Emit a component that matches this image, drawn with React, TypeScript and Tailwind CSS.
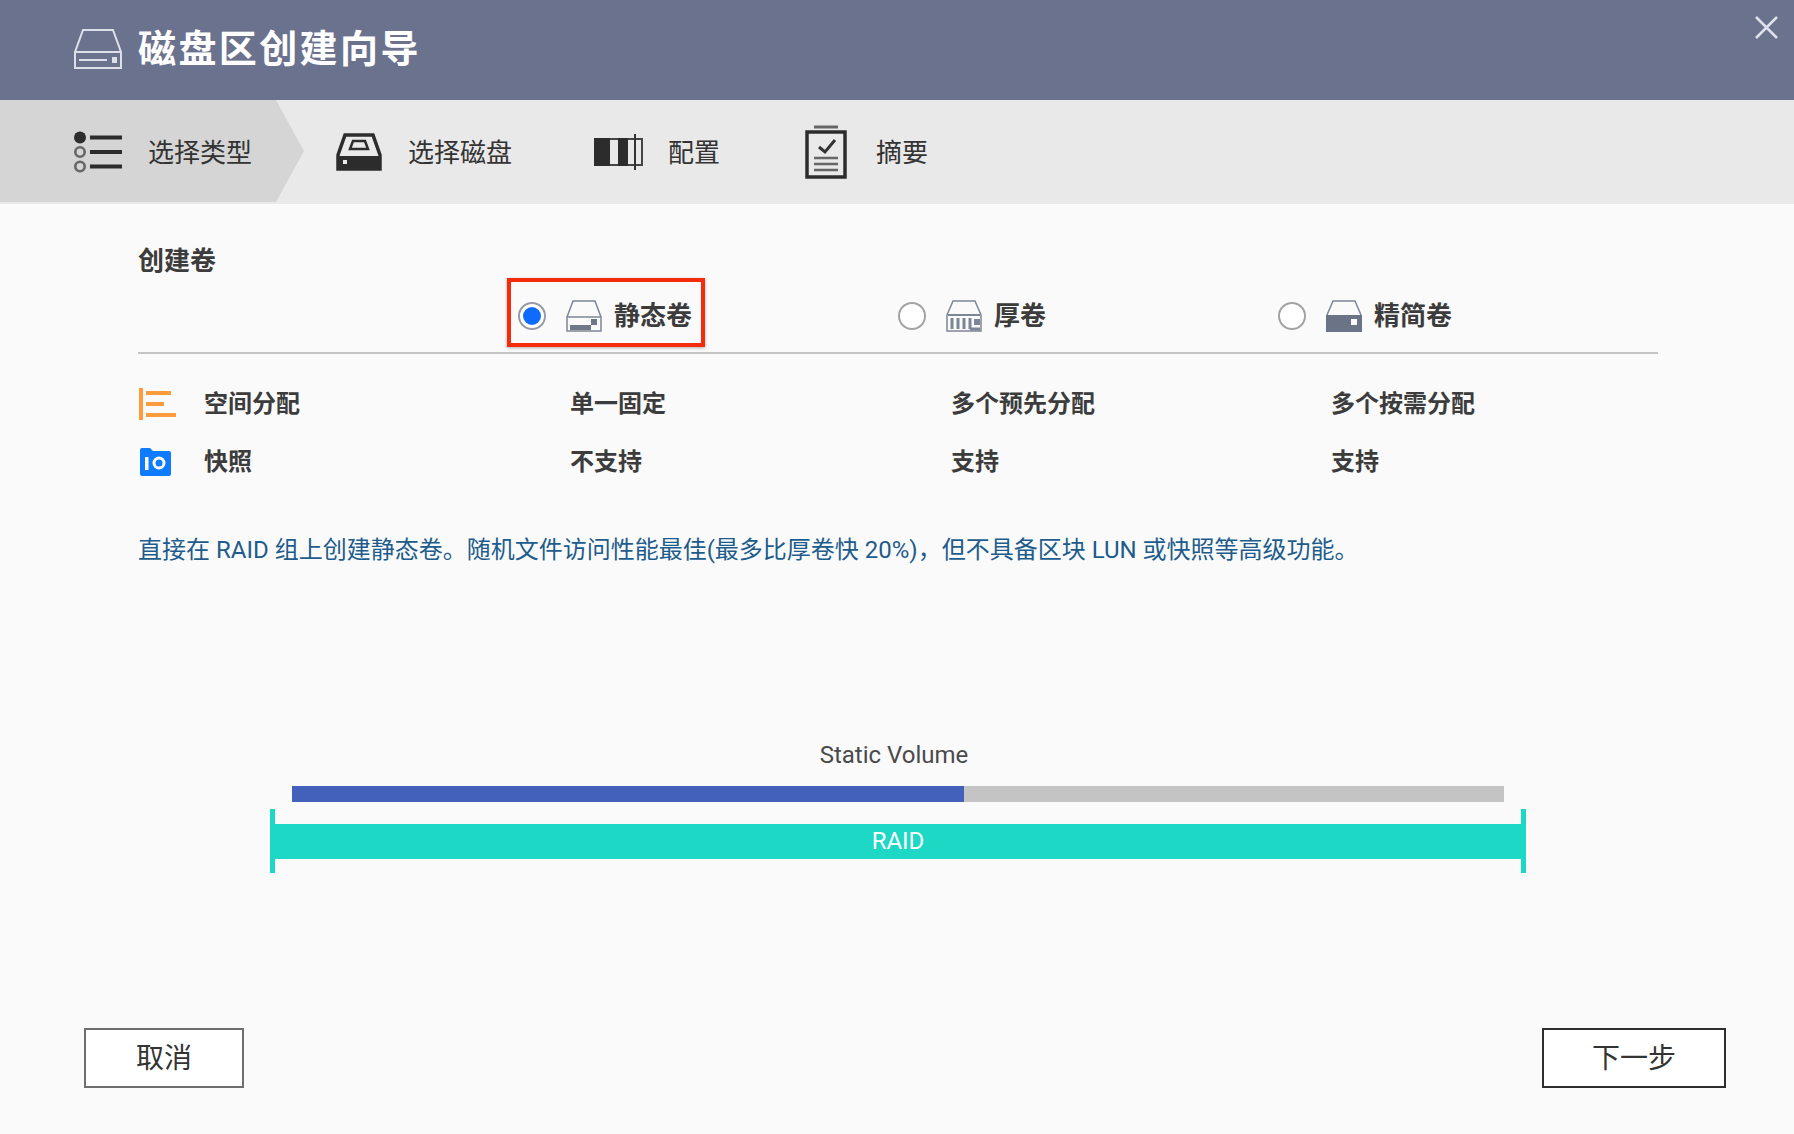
import React from 'react';

const font = { fontFamily: '"Roboto", "Noto Sans CJK SC", sans-serif' };

const HeaderDisk = () => (
  <svg width="50" height="42" viewBox="0 0 50 42" fill="none" stroke="#dde0e8" strokeWidth="2">
    <path d="M2 24 L10 2 H40 L48 24 V40 H2 Z" />
    <path d="M2 24 H48" />
    <path d="M6 32 H34" />
    <rect x="39" y="29" width="5" height="6" fill="#dde0e8" stroke="none" />
  </svg>
);

const ListIcon = () => (
  <svg width="50" height="42" viewBox="0 0 50 42" fill="none">
    <circle cx="6" cy="6.5" r="6" fill="#2c2c2c" />
    <circle cx="6" cy="21" r="4.7" stroke="#666" strokeWidth="2.6" />
    <circle cx="6" cy="35.5" r="4.7" stroke="#666" strokeWidth="2.6" />
    <path d="M16 6.5 H48 M16 21 H48 M16 35.5 H48" stroke="#2c2c2c" strokeWidth="4" />
  </svg>
);

const SolidDisk = () => (
  <svg width="46" height="38" viewBox="0 0 46 38" fill="none">
    <path d="M2 22 L9 2 H37 L44 22 V36 H2 Z" stroke="#2c2c2c" strokeWidth="3.5" />
    <path d="M2 23 H44 V36 H2 Z" fill="#2c2c2c" />
    <path d="M14 16 L17 8 H29 L32 16 Z" stroke="#2c2c2c" strokeWidth="2.5" />
    <rect x="7" y="27" width="4" height="4" fill="#e9e9e9" />
  </svg>
);

const ConfigIcon = () => (
  <svg width="49" height="36" viewBox="0 0 49 36" fill="none">
    <rect x="1" y="5" width="47" height="26" fill="#e9e9e9" stroke="#444" strokeWidth="2" />
    <rect x="0" y="4" width="16" height="28" fill="#2c2c2c" />
    <rect x="24" y="4" width="10" height="28" fill="#2c2c2c" />
    <path d="M41 0 V36" stroke="#333" strokeWidth="2" />
  </svg>
);

const SummaryIcon = () => (
  <svg width="42" height="54" viewBox="0 0 42 54" fill="none">
    <path d="M9 2 H33" stroke="#666" strokeWidth="3" />
    <rect x="2" y="7" width="38" height="45" stroke="#2c2c2c" strokeWidth="3.5" />
    <path d="M14 22 L20 27 L30 15" stroke="#333" strokeWidth="3" />
    <path d="M9 33 H33 M9 39 H33 M9 45 H33" stroke="#666" strokeWidth="2.5" />
  </svg>
);

const Radio = ({ on }: { on?: boolean }) => (
  <span className={`flex h-[28px] w-[28px] shrink-0 items-center justify-center rounded-full border-2 bg-white ${on ? 'border-[#9a9ca3]' : 'border-[#a3a3a3]'}`}>
    {on && <span className="h-[18px] w-[18px] rounded-full bg-[#0f6bff]" />}
  </span>
);

const StaticDisk = () => (
  <svg width="36" height="32" viewBox="0 0 36 32" fill="none">
    <path d="M1 17 L7 1 H29 L35 17 V31 H1 Z" stroke="#7d8696" strokeWidth="1.5" />
    <path d="M1 17 H35" stroke="#7d8696" strokeWidth="1.5" />
    <rect x="4" y="25" width="21" height="5" fill="#6f7888" />
    <rect x="25" y="19" width="6" height="6" fill="#6f7888" />
  </svg>
);

const ThickDisk = () => (
  <svg width="36" height="32" viewBox="0 0 36 32" fill="none">
    <path d="M1 15 L7 1 H29 L35 15 V31 H1 Z" stroke="#7d8696" strokeWidth="1.5" />
    <path d="M2 15 H34" stroke="#7d8696" strokeWidth="2" />
    <path d="M6 18 V29 M12 18 V29 M18 18 V29 M24 18 V29 M24 29 H34" stroke="#7d8696" strokeWidth="3" />
    <rect x="28" y="19" width="6" height="6" fill="#7d8696" />
  </svg>
);

const ThinDisk = () => (
  <svg width="36" height="32" viewBox="0 0 36 32" fill="none">
    <path d="M1 15 L7 1 H29 L35 15" stroke="#7d8696" strokeWidth="1.5" />
    <path d="M0 15 H36 V32 H0 Z" fill="#6b7486" />
    <rect x="25" y="19" width="6" height="6" fill="#fafafa" />
  </svg>
);

const SpaceIcon = () => (
  <svg width="37" height="32" viewBox="0 0 37 32" fill="#ff9a3d">
    <rect x="0" y="0" width="4" height="32" />
    <rect x="7" y="3" width="25" height="4" />
    <rect x="7" y="14" width="18" height="4" />
    <rect x="7" y="25" width="30" height="4" />
  </svg>
);

const SnapshotIcon = () => (
  <svg width="32" height="28" viewBox="0 0 32 28">
    <path d="M1 2 Q1 0 3 0 H11 L14 3 H30 Q32 3 32 5 V26 Q32 28 30 28 H3 Q1 28 1 26 Z" fill="#0f7bff" />
    <rect x="6" y="9" width="3.5" height="13" fill="#fff" />
    <circle cx="20" cy="15" r="5" fill="none" stroke="#fff" strokeWidth="3" />
  </svg>
);

const steps = [
  { icon: <ListIcon />, label: '选择类型', width: 'w-[276px]', gap: 'gap-[24px]', pad: 'pl-[74px]' },
  { icon: <SolidDisk />, label: '选择磁盘', width: 'w-[318px]', gap: 'gap-[26px]', pad: 'pl-[60px]' },
  { icon: <ConfigIcon />, label: '配置', width: 'w-[211px]', gap: 'gap-[25px]', pad: 'pl-0' },
  { icon: <SummaryIcon />, label: '摘要', width: 'w-[200px]', gap: 'gap-[29px]', pad: 'pl-0' },
];

const options = [
  { icon: <StaticDisk />, label: '静态卷', on: true },
  { icon: <ThickDisk />, label: '厚卷', on: false },
  { icon: <ThinDisk />, label: '精简卷', on: false },
];

const rows = [
  { icon: <SpaceIcon />, label: '空间分配', values: ['单一固定', '多个预先分配', '多个按需分配'] },
  { icon: <SnapshotIcon />, label: '快照', values: ['不支持', '支持', '支持'] },
];

export default function App() {
  return (
    <div className="relative flex h-[1134px] w-[1794px] flex-col overflow-hidden bg-[#fafafa] text-[#333]" style={font}>
      {/* Title bar */}
      <div className="flex h-[100px] shrink-0 items-center gap-[15px] bg-[#6b728e] pb-[3px] pl-[73px]">
        <HeaderDisk />
        <h1 className="text-[38px] leading-[48px] font-bold tracking-[2.4px] text-white">磁盘区创建向导</h1>
      </div>
      <button className="absolute top-[16px] right-[16px] text-[#dfe2ea]">
        <svg width="23" height="23" viewBox="0 0 23 23" stroke="currentColor" strokeWidth="2.5">
          <path d="M1 1 L22 22 M22 1 L1 22" />
        </svg>
      </button>

      {/* Steps */}
      <div className="relative flex h-[104px] shrink-0 items-center bg-[#e9e9e9]">
        <div className="absolute top-0 left-0 h-[102px] w-[304px] bg-[#d5d5d5] [clip-path:polygon(0_0,276px_0,100%_50%,276px_100%,0_100%)]" />
        {steps.map((s) => (
          <div key={s.label} className={`relative flex items-center ${s.width} ${s.gap} ${s.pad}`}>
            {s.icon}
            <span className="pt-[2px] text-[26px] leading-[36px] text-[#333]">{s.label}</span>
          </div>
        ))}
      </div>

      {/* Body */}
      <div className="flex flex-1 flex-col px-[138px]">
        <h2 className="mt-[39px] text-[26px] leading-[36px] font-semibold text-[#3c3c3c]">创建卷</h2>

        <div className="-mt-px grid grid-cols-[380px_380px_1fr] pl-[369px]">
          {options.map((o) => (
            <div
              key={o.label}
              className={`flex h-[69px] w-fit items-center border-[4px] pt-[6px] pr-[9px] pl-[7px] ${o.on ? 'border-[#f52c0c] shadow-[0_1px_3px_rgba(0,0,0,0.3)]' : 'border-transparent'}`}
            >
              <Radio on={o.on} />
              <span className="mr-[12px] ml-[20px] flex">{o.icon}</span>
              <span className="text-[26px] leading-[36px] font-semibold text-[#3c3c3c]">{o.label}</span>
            </div>
          ))}
        </div>

        <div className="mt-[5px] h-[2px] w-[1520px] bg-[#c4c4c4]" />

        <div className="mt-[32px] flex flex-col gap-[22px]">
          {rows.map((r) => (
            <div key={r.label} className="grid grid-cols-[432px_381px_380px_1fr] items-center text-[#3c3c3c]">
              <div className="flex items-center">
                <span className="flex w-[66px] pl-px">{r.icon}</span>
                <span className="text-[24px] leading-[36px] font-semibold">{r.label}</span>
              </div>
              {r.values.map((v, i) => (
                <span key={i} className="text-[24px] leading-[36px] font-semibold">{v}</span>
              ))}
            </div>
          ))}
        </div>

        <p className="mt-[52px] text-[24px] leading-[36px] text-[#1d5c8c]">
          直接在 RAID 组上创建静态卷。随机文件访问性能最佳(最多比厚卷快 20%)，但不具备区块 LUN 或快照等高级功能。
        </p>

        {/* Volume diagram */}
        <div className="mt-[169px] ml-[132px] w-[1256px]">
          <div className="pr-[8px] text-center text-[24px] leading-[36px] text-[#4a4a4a]">Static Volume</div>
          <div className="mx-[22px] mt-[13px] flex h-[16px] bg-[#c4c4c4]">
            <div className="w-[672px] bg-[#4361bb]" />
          </div>
          <div className="mt-[7px] flex h-[64px] items-center">
            <div className="h-full w-[5px] bg-[#1cd8c4]" />
            <div className="flex h-[35px] flex-1 items-center justify-center bg-[#1cd8c4] text-[24px] text-white">RAID</div>
            <div className="h-full w-[5px] bg-[#1cd8c4]" />
          </div>
        </div>
      </div>

      {/* Footer */}
      <div className="mb-[46px] flex justify-between pr-[68px] pl-[84px]">
        <button className="h-[60px] w-[160px] border-[2px] border-[#6e6e6e] bg-white pt-[2px] text-[28px] text-[#333]">取消</button>
        <button className="h-[60px] w-[184px] border-[2px] border-[#2e2e2e] bg-white pt-[2px] text-[28px] text-[#333]">下一步</button>
      </div>
    </div>
  );
}
